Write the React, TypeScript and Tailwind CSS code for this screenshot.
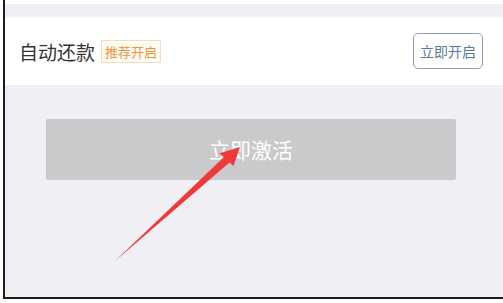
import React from "react";

export default function App() {
  const font = { fontFamily: '"Noto Sans CJK SC", "Noto Sans", sans-serif' };
  return (
    <div className="relative w-[503px] h-[303px] bg-white overflow-hidden" style={font}>
      <div className="ml-[3px] h-[299px] border-l-2 border-b-2 border-[#1c1c1f] bg-[#f0eff4] flex flex-col">
        <div className="h-[4px] bg-white" />
        <div className="h-[13px]" />
        <div className="h-[68px] bg-white flex items-center pl-[14px] pr-[20px]">
          <span className="text-[19px] leading-none text-[#333333]">自动还款</span>
          <span className="ml-[6px] h-[23px] px-[3px] flex items-center border border-[#f3dcc2] bg-[#fffaf2] text-[13px] leading-none text-[#ec9440]">
            推荐开启
          </span>
          <div className="flex-1" />
          <div className="w-[70px] h-[36px] flex items-center justify-center rounded-[5px] border-[1.5px] border-[#8aa0b8] text-[14px] leading-none text-[#5d7894]">
            立即开启
          </div>
        </div>
        <div className="pt-[34px] pl-[41px]">
          <div className="w-[410px] h-[61px] rounded-[2px] bg-[#cac9cb] flex items-center justify-center text-[21px] leading-none text-white">
            立即激活
          </div>
        </div>
      </div>
      <svg className="absolute left-0 top-0" width="503" height="303" viewBox="0 0 503 303">
        <polygon
          points="114.5,261.5 224,157 219,153.5 240,147 233.5,166 229.5,162.5"
          fill="#f03a3a"
        />
      </svg>
    </div>
  );
}
